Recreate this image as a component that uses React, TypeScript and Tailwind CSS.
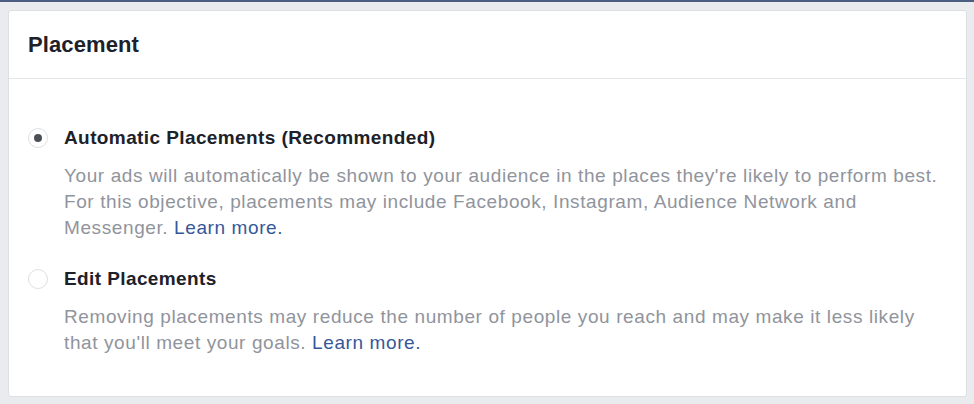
const font = { fontFamily: '"Liberation Sans", Arial, sans-serif' }

type Option = {
  label: string
  checked: boolean
  lines: React.ReactNode
}

function Radio({ checked }: { checked: boolean }) {
  return (
    <div className="flex h-[20px] w-[20px] shrink-0 items-center justify-center rounded-full border border-[#dddfe2] bg-white">
      {checked && <div className="h-[8px] w-[8px] rounded-full bg-[#4b4f56]" />}
    </div>
  )
}

function LearnMore() {
  return <a className="text-[#365899]">Learn more.</a>
}

const options: Option[] = [
  {
    label: "Automatic Placements (Recommended)",
    checked: true,
    lines: (
      <>
        Your ads will automatically be shown to your audience in the places they're likely to perform best.
        <br />
        For this objective, placements may include Facebook, Instagram, Audience Network and
        <br />
        Messenger. <LearnMore />
      </>
    ),
  },
  {
    label: "Edit Placements",
    checked: false,
    lines: (
      <>
        Removing placements may reduce the number of people you reach and may make it less likely
        <br />
        that you'll meet your goals. <LearnMore />
      </>
    ),
  },
]

export default function App() {
  return (
    <div className="h-[404px] w-[974px] border-t-2 border-[#4b5e7f] bg-[#e9ebee] pt-[8px] pl-[8px]" style={font}>
      <div className="h-[387px] w-[959px] rounded-[3px] border border-[#dddfe2] bg-white">
        <div className="flex h-[68px] items-center border-b border-[#e5e6e9] px-[19px]">
          <h2 className="text-[22px] font-bold tracking-[0.1px] text-[#1d2129]">Placement</h2>
        </div>
        <div className="flex flex-col gap-[26px] pt-[47px] pl-[19px] pr-[10px]">
          {options.map((o) => (
            <div key={o.label}>
              <div className="flex h-[24px] items-center gap-[16px]">
                <Radio checked={o.checked} />
                <span className="text-[19px] font-bold tracking-[0.4px] text-[#1d2129]">{o.label}</span>
              </div>
              <p className="mt-[13px] pl-[36px] text-[19px] leading-[26px] tracking-[0.6px] text-[#90949c]">{o.lines}</p>
            </div>
          ))}
        </div>
      </div>
    </div>
  )
}
